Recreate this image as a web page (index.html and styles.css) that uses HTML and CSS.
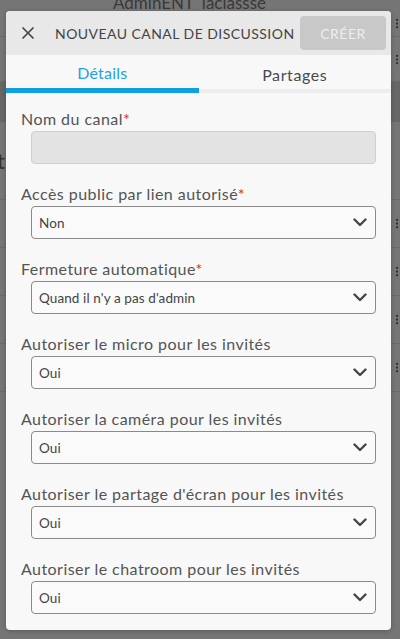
FILE: index.html
```html
<!DOCTYPE html>
<html lang="fr">
<head>
<meta charset="utf-8">
<title>Nouveau canal de discussion</title>
<link rel="stylesheet" href="styles.css">
</head>
<body>
<div class="backdrop">
  <div class="bg-title">AdminENT_laclassse</div>
  <div class="bg-row r1"><span class="grip"></span></div>
  <div class="bg-row r2"><span class="grip"></span></div>
  <div class="bg-band"></div>
  <div class="bg-row r3"><span class="bg-t">t</span></div>
  <div class="bg-row r4"><span class="grip"></span></div>
  <div class="bg-row r5"><span class="grip"></span></div>
  <div class="bg-row r6"><span class="grip"></span></div>
  <div class="bg-row r7"><span class="grip"></span></div>
</div>

<div class="modal">
  <header class="modal-header">
    <button class="close" aria-label="Fermer">
      <svg width="12" height="12" viewBox="0 0 12 12"><path d="M1 1L11 11M11 1L1 11" stroke="#474747" stroke-width="1.7" stroke-linecap="round"/></svg>
    </button>
    <h1 class="title">NOUVEAU CANAL DE DISCUSSION</h1>
    <button class="create">CRÉER</button>
  </header>
  <nav class="tabs">
    <div class="tab active">Détails</div>
    <div class="tab">Partages</div>
  </nav>
  <form class="body">
    <div class="field">
      <label class="label">Nom du canal<span class="req">*</span></label>
      <div class="input"></div>
    </div>
    <div class="field">
      <label class="label">Accès public par lien autorisé<span class="req">*</span></label>
      <div class="select"><span>Non</span><svg class="chev" width="14" height="9" viewBox="0 0 14 9"><path d="M1.5 1.5L7 7L12.5 1.5" fill="none" stroke="#454545" stroke-width="2.4" stroke-linecap="round" stroke-linejoin="round"/></svg></div>
    </div>
    <div class="field">
      <label class="label">Fermeture automatique<span class="req">*</span></label>
      <div class="select"><span>Quand il n'y a pas d'admin</span><svg class="chev" width="14" height="9" viewBox="0 0 14 9"><path d="M1.5 1.5L7 7L12.5 1.5" fill="none" stroke="#454545" stroke-width="2.4" stroke-linecap="round" stroke-linejoin="round"/></svg></div>
    </div>
    <div class="field">
      <label class="label">Autoriser le micro pour les invités</label>
      <div class="select"><span>Oui</span><svg class="chev" width="14" height="9" viewBox="0 0 14 9"><path d="M1.5 1.5L7 7L12.5 1.5" fill="none" stroke="#454545" stroke-width="2.4" stroke-linecap="round" stroke-linejoin="round"/></svg></div>
    </div>
    <div class="field">
      <label class="label">Autoriser la caméra pour les invités</label>
      <div class="select"><span>Oui</span><svg class="chev" width="14" height="9" viewBox="0 0 14 9"><path d="M1.5 1.5L7 7L12.5 1.5" fill="none" stroke="#454545" stroke-width="2.4" stroke-linecap="round" stroke-linejoin="round"/></svg></div>
    </div>
    <div class="field">
      <label class="label">Autoriser le partage d'écran pour les invités</label>
      <div class="select"><span>Oui</span><svg class="chev" width="14" height="9" viewBox="0 0 14 9"><path d="M1.5 1.5L7 7L12.5 1.5" fill="none" stroke="#454545" stroke-width="2.4" stroke-linecap="round" stroke-linejoin="round"/></svg></div>
    </div>
    <div class="field">
      <label class="label">Autoriser le chatroom pour les invités</label>
      <div class="select"><span>Oui</span><svg class="chev" width="14" height="9" viewBox="0 0 14 9"><path d="M1.5 1.5L7 7L12.5 1.5" fill="none" stroke="#454545" stroke-width="2.4" stroke-linecap="round" stroke-linejoin="round"/></svg></div>
    </div>
  </form>
</div>
</body>
</html>
```

FILE: styles.css
```css
* { box-sizing: border-box; }
html, body { margin: 0; padding: 0; }
body {
  width: 400px;
  height: 639px;
  overflow: hidden;
  background: #757575;
  font-family: Lato, "Noto Sans", sans-serif;
  position: relative;
}

/* dimmed page behind the dialog */
.backdrop {
  display: flex;
  flex-direction: column;
  height: 100%;
}
.bg-title {
  height: 10px;
  line-height: 6px;
  padding-left: 113px;
  font-size: 17px;
  color: #393939;
  overflow: hidden;
}
.bg-row {
  border-bottom: 1px solid #6a6a6a;
  display: flex;
  justify-content: flex-end;
  align-items: center;
  padding-right: 1px;
}
.r1 { height: 27px; }
.r2 { height: 45px; }
.bg-band { height: 40px; background: #676767; }
.r3 { height: 78px; justify-content: flex-start; }
.r4 { height: 48px; }
.r5 { height: 48px; }
.r6 { height: 48px; }
.r7 { height: 48px; }
.bg-t { font-size: 22px; color: #333; margin-left: -3px; }
.grip {
  width: 4px;
  height: 11px;
  background-image: radial-gradient(circle, #2e2e2e 1.2px, transparent 1.4px);
  background-size: 4px 3.7px;
}

/* dialog */
.modal {
  position: absolute;
  left: 6px;
  top: 11px;
  width: 385px;
  height: 619px;
  background: #f8f8f8;
  border-radius: 4px;
  overflow: hidden;
  display: flex;
  flex-direction: column;
  box-shadow: 0 1px 4px rgba(0,0,0,0.25);
}
.modal-header {
  height: 44px;
  background: #e8e8e8;
  display: flex;
  align-items: center;
  padding: 0 5px 0 16px;
}
.close {
  border: 0;
  background: none;
  padding: 0;
  width: 12px;
  height: 12px;
  display: flex;
  margin-right: 21px;
}
.title {
  margin: 0;
  flex: 1;
  font-size: 14px;
  font-weight: 400;
  color: #444;
  letter-spacing: 0.45px;
  white-space: nowrap;
}
.create {
  width: 86px;
  height: 34px;
  border: 0;
  border-radius: 4px;
  background: #c8c8c8;
  color: #eeeeee;
  font-family: Lato, "Noto Sans", sans-serif;
  font-size: 14px;
  letter-spacing: 0.5px;
  padding: 0;
}

.tabs {
  display: flex;
  height: 38px;
  border-bottom: 4px solid #ededed;
}
.tab {
  flex: 1;
  text-align: center;
  font-size: 16px;
  color: #4a4a4a;
  line-height: 40px;
  margin-bottom: -4px;
  letter-spacing: 0.6px;
}
.tab.active {
  color: #21a1e0;
  border-bottom: 5px solid #0fa0e2;
  line-height: 35px;
  letter-spacing: 0.2px;
}

.body {
  display: flex;
  flex-direction: column;
  gap: 18px;
  padding: 14px 15px 0 15px;
}
.field {
  display: flex;
  flex-direction: column;
}
.label {
  height: 24px;
  line-height: 24px;
  font-size: 16px;
  color: #545454;
  letter-spacing: 0.45px;
  white-space: nowrap;
}
.req { color: #f01818; }
.input, .select {
  margin-left: 10px;
  height: 33px;
  border-radius: 4px;
}
.input {
  background: #e3e3e3;
  border: 1px solid #cfcfcf;
}
.select {
  border: 1px solid #8a8a8a;
  background: #fafafa;
  display: flex;
  align-items: center;
  justify-content: space-between;
  padding: 0 8px 0 7px;
  font-size: 13.5px;
  color: #444;
  letter-spacing: 0.1px;
}
.chev { display: block; margin-top: -1px; }
```
